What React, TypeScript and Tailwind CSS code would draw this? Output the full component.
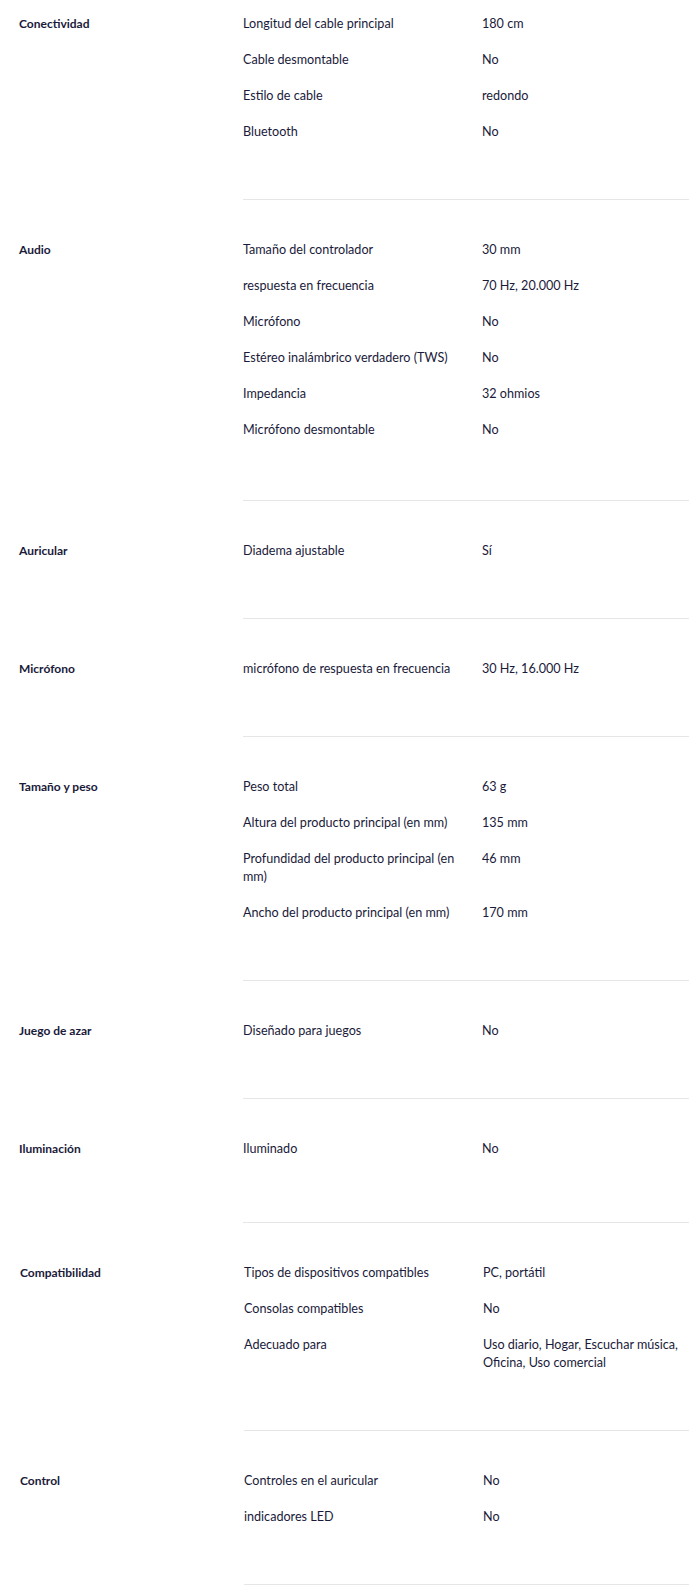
import React from 'react';

interface Spec {
  label: string;
  value: string;
}

interface Section {
  title: string;
  specs: Spec[];
  shift?: boolean;
  pb?: string;
}

const SECTIONS: Section[] = [
  {
    title: 'Conectividad',
    specs: [
      { label: 'Longitud del cable principal', value: '180 cm' },
      { label: 'Cable desmontable', value: 'No' },
      { label: 'Estilo de cable', value: 'redondo' },
      { label: 'Bluetooth', value: 'No' },
    ],
  },
  {
    title: 'Audio',
    pb: 'pb-[43px]',
    specs: [
      { label: 'Tamaño del controlador', value: '30 mm' },
      { label: 'respuesta en frecuencia', value: '70 Hz, 20.000 Hz' },
      { label: 'Micrófono', value: 'No' },
      { label: 'Estéreo inalámbrico verdadero (TWS)', value: 'No' },
      { label: 'Impedancia', value: '32 ohmios' },
      { label: 'Micrófono desmontable', value: 'No' },
    ],
  },
  {
    title: 'Auricular',
    specs: [{ label: 'Diadema ajustable', value: 'Sí' }],
  },
  {
    title: 'Micrófono',
    specs: [{ label: 'micrófono de respuesta en frecuencia', value: '30 Hz, 16.000 Hz' }],
  },
  {
    title: 'Tamaño y peso',
    specs: [
      { label: 'Peso total', value: '63 g' },
      { label: 'Altura del producto principal (en mm)', value: '135 mm' },
      { label: 'Profundidad del producto principal (en mm)', value: '46 mm' },
      { label: 'Ancho del producto principal (en mm)', value: '170 mm' },
    ],
  },
  {
    title: 'Juego de azar',
    specs: [{ label: 'Diseñado para juegos', value: 'No' }],
  },
  {
    title: 'Iluminación',
    pb: 'pb-[46px]',
    specs: [{ label: 'Iluminado', value: 'No' }],
  },
  {
    title: 'Compatibilidad',
    shift: true,
    specs: [
      { label: 'Tipos de dispositivos compatibles', value: 'PC, portátil' },
      { label: 'Consolas compatibles', value: 'No' },
      { label: 'Adecuado para', value: 'Uso diario, Hogar, Escuchar música, Oficina, Uso comercial' },
    ],
  },
  {
    title: 'Control',
    shift: true,
    specs: [
      { label: 'Controles en el auricular', value: 'No' },
      { label: 'indicadores LED', value: 'No' },
    ],
  },
];

const App: React.FC = () => {
  return (
    <div
      className="w-[689px] bg-white leading-[18px] text-[#1a1a3a]"
      style={{ fontFamily: 'Lato, "Open Sans", sans-serif' }}
    >
      {SECTIONS.map((section, i) => (
        <div key={section.title} className={`flex ${section.shift ? 'pl-px' : ''}`}>
          {/* Section title */}
          <div className={`w-[243px] shrink-0 pl-[19px] ${i === 0 ? 'pt-[15px]' : 'pt-[41px]'}`}>
            <h3 className="text-[12px] font-bold">{section.title}</h3>
          </div>

          {/* Spec rows */}
          <div
            className={`flex-1 border-b border-[#e6e6e6] text-[12.6px] ${i === 0 ? 'pt-[15px]' : 'pt-[41px]'} ${
              section.pb ?? 'pb-[40px]'
            }`}
          >
            {section.specs.map((spec) => (
              <div key={spec.label} className="grid grid-cols-[239px_1fr] mb-[18px]">
                <div className="pr-4">{spec.label}</div>
                <div className="pr-2">{spec.value}</div>
              </div>
            ))}
          </div>
        </div>
      ))}
    </div>
  );
};

export default App;
